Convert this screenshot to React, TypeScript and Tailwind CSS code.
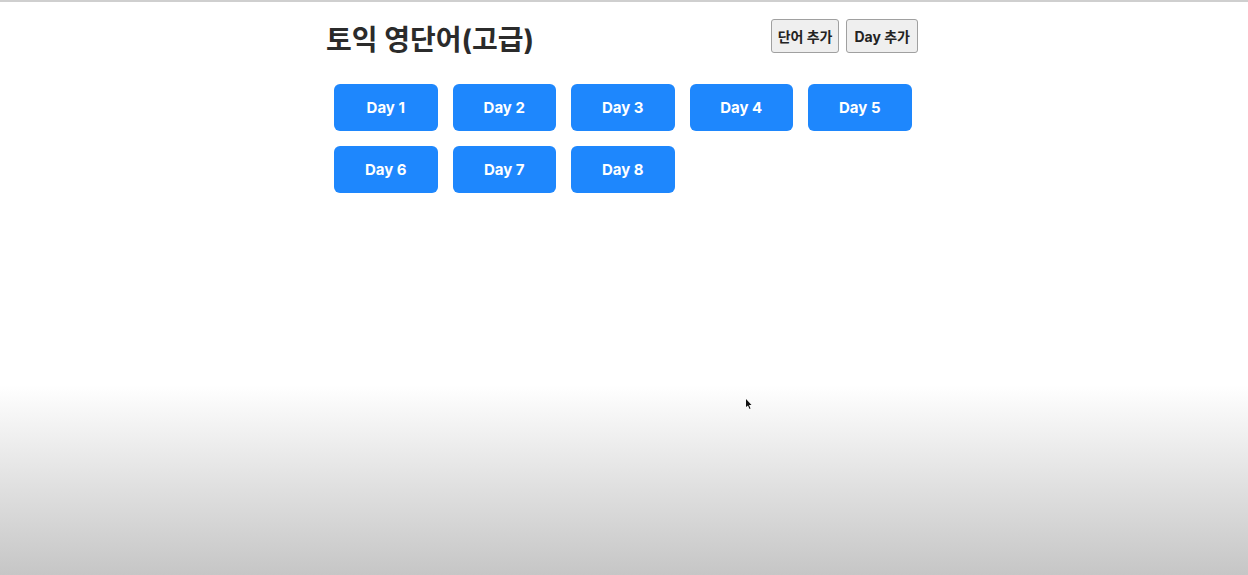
import React from "react";

const days = [1, 2, 3, 4, 5, 6, 7, 8];

export default function App() {
  return (
    <div
      className="relative h-[575px] w-full overflow-hidden border-t-2 border-[#cfcfcf] bg-white text-[#333]"
      style={{ fontFamily: "Inter, 'Noto Sans CJK KR', 'Noto Sans', sans-serif" }}
    >
      <div className="mx-auto w-[592px] pt-[17px] translate-x-[-2px]">
        {/* ===== Header ===== */}
        <div className="flex items-start justify-between">
          <h1 className="mt-[3px] text-[28px] font-bold leading-[36px] tracking-[0px] text-[#2b2b2b]">
            토익 영단어(고급)
          </h1>
          <div className="flex gap-[7px]">
            <button className="h-[34px] rounded-[3px] border border-[#a0a0a0] bg-[#efefef] px-[6px] text-[14px] font-bold text-[#222]">
              단어 추가
            </button>
            <button className="h-[34px] rounded-[3px] border border-[#a0a0a0] bg-[#efefef] px-[7px] text-[14px] font-bold text-[#222]">
              Day 추가
            </button>
          </div>
        </div>

        {/* ===== Day Grid ===== */}
        <div className="mt-[26px] flex w-[600px] flex-wrap gap-x-[15px] gap-y-[15px] pl-[8px]">
          {days.map((d) => (
            <button
              key={d}
              className="h-[47px] w-[103.5px] rounded-[6px] bg-[#1e87fd] pt-[2px] text-[15px] font-bold text-white"
            >
              Day {d}
            </button>
          ))}
        </div>
      </div>

      {/* bottom shade */}
      <div className="pointer-events-none absolute inset-x-0 bottom-0 h-[190px] bg-gradient-to-b from-white to-[#c6c6c6]" />

      {/* cursor */}
      <svg className="absolute left-[745px] top-[397px]" width="8" height="11" viewBox="0 0 8 11">
        <path d="M1 0 L1 8 L3 6.5 L4.5 10 L5.5 9.5 L4 6 L6.5 6 Z" fill="#111" />
      </svg>
    </div>
  );
}
